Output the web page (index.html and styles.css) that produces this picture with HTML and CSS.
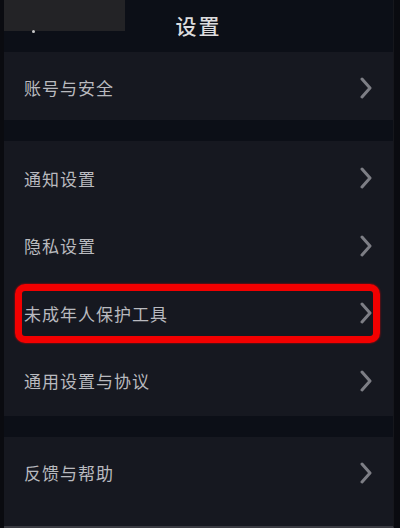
FILE: index.html
```html
<!DOCTYPE html>
<html lang="zh-CN">
<head>
<meta charset="utf-8">
<title>设置</title>
<link rel="stylesheet" href="styles.css">
</head>
<body>
<div class="screen">
  <header class="topbar">
    <div class="cover"></div>
    <span class="dot"></span>
    <h1 class="title">设置</h1>
  </header>
  <section class="group group-first">
    <div class="row"><span class="label">账号与安全</span><svg class="chev" viewBox="0 0 12 22"><path d="M2 2 L10 11 L2 20"/></svg></div>
  </section>
  <section class="group group-mid">
    <div class="row"><span class="label">通知设置</span><svg class="chev" viewBox="0 0 12 22"><path d="M2 2 L10 11 L2 20"/></svg></div>
    <div class="row"><span class="label">隐私设置</span><svg class="chev" viewBox="0 0 12 22"><path d="M2 2 L10 11 L2 20"/></svg></div>
    <div class="row row-marked"><span class="label">未成年人保护工具</span><svg class="chev" viewBox="0 0 12 22"><path d="M2 2 L10 11 L2 20"/></svg></div>
    <div class="row"><span class="label">通用设置与协议</span><svg class="chev" viewBox="0 0 12 22"><path d="M2 2 L10 11 L2 20"/></svg></div>
  </section>
  <section class="group group-last">
    <div class="row"><span class="label">反馈与帮助</span><svg class="chev" viewBox="0 0 12 22"><path d="M2 2 L10 11 L2 20"/></svg></div>
  </section>
</div>
</body>
</html>
```

FILE: styles.css
```css
html, body {
  margin: 0;
  padding: 0;
}
body {
  width: 400px;
  height: 528px;
  overflow: hidden;
  background: #0a0b10;
  font-family: "Noto Sans CJK SC", "Noto Sans", sans-serif;
}
.screen {
  margin-left: 4px;
  width: 389px;
  height: 526px;
  background: #0c0f17;
  border-bottom: 2px solid #3a3b42;
  border-right: 1px solid #16171c;
  display: flex;
  flex-direction: column;
  position: relative;
}
.topbar {
  height: 52px;
  display: flex;
  align-items: center;
  justify-content: center;
  position: relative;
}
.cover {
  position: absolute;
  left: 0;
  top: 0;
  width: 121px;
  height: 31px;
  background: #232326;
}
.dot {
  position: absolute;
  left: 28px;
  top: 30px;
  width: 3px;
  height: 3px;
  border-radius: 50%;
  background: #c8c8c8;
}
.title {
  margin: 0 0 2px 0;
  font-size: 21px;
  font-weight: 500;
  letter-spacing: 2px;
  color: #dcdcde;
}
.group {
  background: #161820;
  display: flex;
  flex-direction: column;
}
.group-first {
  height: 68px;
}
.group-mid {
  margin-top: 21px;
  padding-top: 2px;
}
.group-last {
  margin-top: 21px;
  flex: 1;
}
.row {
  height: 67.5px;
  display: flex;
  align-items: center;
  justify-content: space-between;
  padding: 3px 21px 0 20px;
  box-sizing: border-box;
  position: relative;
}
.group-first .row, .group-last .row {
  height: 68px;
}
.group-mid .row:last-child {
  height: 70.5px;
  padding-bottom: 3px;
}
.label {
  font-size: 17px;
  letter-spacing: 1px;
  color: #b9babf;
}
.chev {
  width: 12px;
  height: 22px;
}
.chev path {
  fill: none;
  stroke: #7d7e85;
  stroke-width: 3;
  stroke-linecap: round;
  stroke-linejoin: round;
}
.row-marked::after {
  content: "";
  position: absolute;
  left: 11px;
  right: 13px;
  top: 6px;
  height: 59px;
  box-sizing: border-box;
  border: 7px solid #f20000;
  border-radius: 10px;
  box-shadow: 0 0 2px #e00000;
}
```
